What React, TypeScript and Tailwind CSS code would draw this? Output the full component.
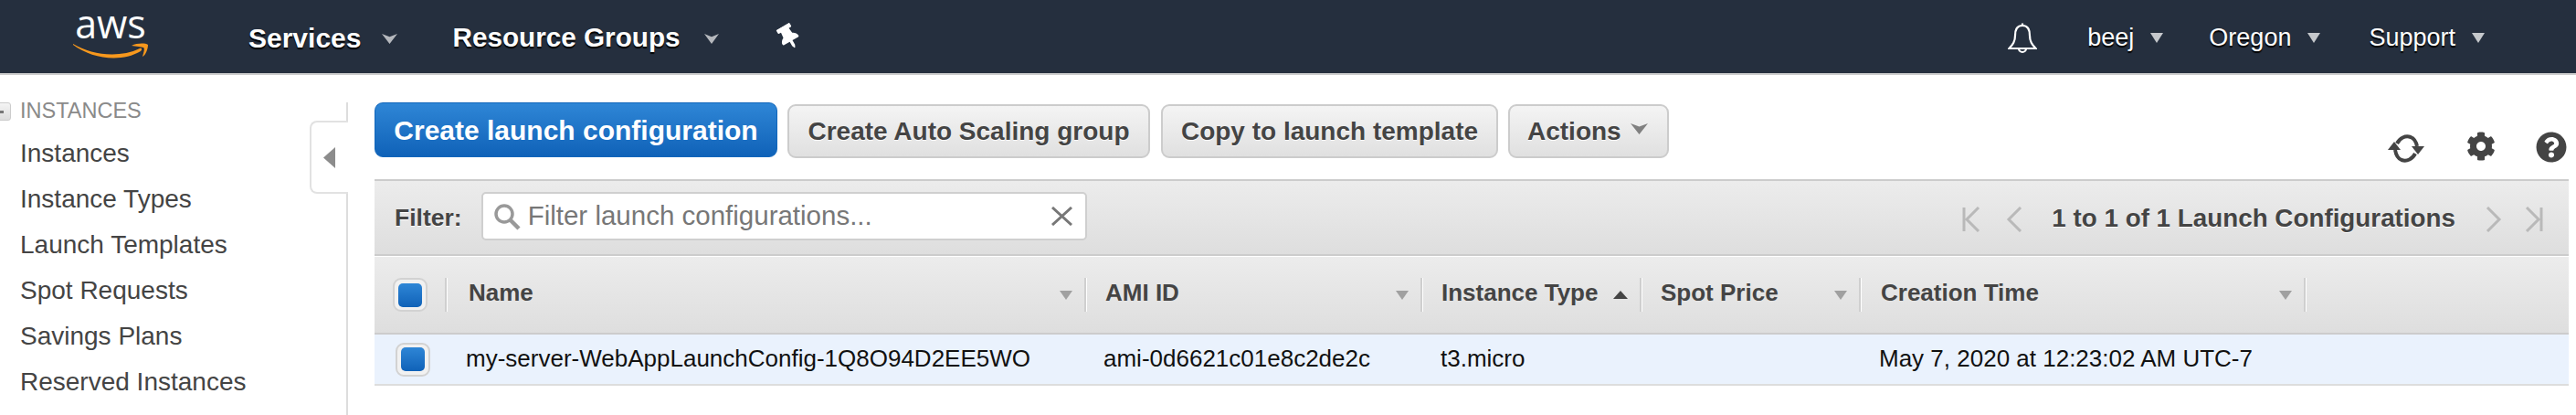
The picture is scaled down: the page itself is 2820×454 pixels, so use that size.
import React from "react";
import { FaCog, FaQuestionCircle, FaThumbtack } from "react-icons/fa";

const Caret = ({ w, h, color, up, notch }: { w: number; h: number; color: string; up?: boolean; notch?: boolean }) => (
  <svg width={w} height={h} viewBox="0 0 10 10" preserveAspectRatio="none" className="shrink-0">
    <path d={up ? "M5 0L10 10H0Z" : notch ? "M0 0L5 3L10 0L5 10Z" : "M0 0H10L5 10Z"} fill={color} />
  </svg>
);

const Pager = ({ d }: { d: string }) => (
  <svg width="20" height="28" viewBox="0 0 20 28" fill="none" stroke="#b9b9b9" strokeWidth="3" className="shrink-0">
    <path d={d} />
  </svg>
);

const Checkbox = () => (
  <div className="flex h-[37px] w-[38px] items-center justify-center rounded-[9px] border-2 border-[#d2d2d2] bg-[#f1f1f1]">
    <div className="h-[26px] w-[26px] rounded-[5px] bg-gradient-to-b from-[#2e86d6] to-[#0f62b8]" />
  </div>
);

const HeadCell = ({ label, sort, pad }: { label?: string; sort?: "down" | "up"; pad?: string }) => (
  <div className={`flex items-center ${pad ?? "pl-[23px]"}`}>
    <span className="flex-1 pb-[4px] text-[26px] font-bold text-[#444]">{label}</span>
    {sort === "down" && <Caret w={14} h={10} color="#a0a0a0" />}
    {sort === "up" && <Caret w={16} h={9} color="#444" up />}
    <div className="ml-[13px] h-[37px] w-[3px] border-l-2 border-[#cfcfcf] bg-white" />
  </div>
);

const sideItems = ["Instances", "Instance Types", "Launch Templates", "Spot Requests", "Savings Plans", "Reserved Instances"];

export default function App() {
  return (
    <div className="flex h-[454px] w-[2820px] flex-col overflow-hidden bg-white font-['Liberation_Sans',sans-serif]">
      {/* top nav */}
      <div className="flex h-[82px] shrink-0 items-center border-b-2 border-[#cccccc] bg-[#252f3e] text-white">
        <div className="ml-[80px] flex w-[82px] flex-col items-center">
          <span className="-mt-[4px] mb-[6px] font-['Open_Sans',sans-serif] text-[43px] leading-[30px]">aws</span>
          <svg width="82" height="18" viewBox="0 0 82 18" fill="#f7981d">
            <path d="M0 1C20 13 50 17 73 6C75 5 76 7 74 9C52 22 20 17 0 2Z" />
            <path d="M64 3C70 0 79 0 82 2C82 7 79 14 76 15C77 11 79 6 77 5C75 4 69 4 64 3Z" />
          </svg>
        </div>
        <span className="ml-[110px] pt-[2px] text-[30px] font-bold [text-shadow:0_2px_1px_#000]">Services</span>
        <span className="ml-[23px] pt-[4px]"><Caret w={17} h={11} color="#b5b8bd" notch /></span>
        <span className="ml-[60px] pt-[2px] text-[29.700px] font-bold [text-shadow:0_2px_1px_#000]">Resource Groups</span>
        <span className="ml-[26px] pt-[4px]"><Caret w={16} h={11} color="#b5b8bd" notch /></span>
        <FaThumbtack className="ml-[63px] h-[27px] w-[27px] -rotate-[30deg] text-white" />

        <div className="ml-auto flex items-center pr-[100px] pt-[3px] text-[27px]">
          <svg width="32" height="34" viewBox="0 0 32 34" fill="none" stroke="#fff" strokeWidth="2.2">
            <path d="M16 3C9 3 8 9 8 14C8 21 5 24 1.5 28H30.5C27 24 24 21 24 14C24 9 23 3 16 3Z" />
            <path d="M12 28a4 4 0 0 0 8 0" />
            <path d="M16 0.5V3" />
          </svg>
          <span className="ml-[55px] [text-shadow:0_2px_1px_#000]">beej</span>
          <span className="ml-[18px]"><Caret w={14} h={11} color="#c5c8cc" /></span>
          <span className="ml-[50px] [text-shadow:0_2px_1px_#000]">Oregon</span>
          <span className="ml-[18px]"><Caret w={14} h={11} color="#c5c8cc" /></span>
          <span className="ml-[53px] [text-shadow:0_2px_1px_#000]">Support</span>
          <span className="ml-[18px]"><Caret w={14} h={11} color="#c5c8cc" /></span>
        </div>
      </div>

      <div className="flex min-h-0 flex-1">
        {/* sidebar */}
        <div className="relative mt-[30px] w-[381px] shrink-0 border-r-2 border-[#dddddd]">
          <div className="flex h-[20px] items-center">
            <div className="-ml-[14px] flex h-[20px] w-[26px] items-center justify-center rounded-[3px] border border-[#cccccc] bg-gradient-to-b from-[#f4f4f4] to-[#dddddd]">
              <div className="h-[3px] w-[10px] bg-[#777]" />
            </div>
            <span className="ml-[10px] text-[23.500px] text-[#8a8a8a]">INSTANCES</span>
          </div>
          <div className="mt-[12px]">
            {sideItems.map((item) => (
              <div key={item} className="flex h-[50px] items-center pb-[2px] pl-[22px] text-[28px] text-[#444]">
                {item}
              </div>
            ))}
          </div>
          <div className="absolute left-[339px] top-[20px] flex h-[80px] w-[42px] items-center rounded-l-lg border-2 border-r-0 border-[#e2e2e2] bg-white pl-[13px]">
            <svg width="13" height="23" viewBox="0 0 13 23">
              <path d="M13 0V23L0 11.5Z" fill="#8c8c8c" />
            </svg>
          </div>
        </div>

        {/* main */}
        <div className="ml-[29px] flex w-[2402px] flex-col">
          <div className="flex h-[114px] shrink-0 items-start pt-[30px]">
            <button className="h-[60px] w-[441px] rounded-[9px] border border-[#1166bb] bg-gradient-to-b from-[#2e86d6] to-[#0f62b8] text-[30px] font-bold text-white">
              Create launch configuration
            </button>
            <button className="ml-[11px] mt-[2px] h-[59px] w-[397px] rounded-[9px] border-2 border-[#cccccc] bg-gradient-to-b from-[#f4f4f4] to-[#e0e0e0] text-[28px] font-bold text-[#444] [text-shadow:0_1px_0_#fff]">
              Create Auto Scaling group
            </button>
            <button className="ml-[12px] mt-[2px] h-[59px] w-[369px] rounded-[9px] border-2 border-[#cccccc] bg-gradient-to-b from-[#f4f4f4] to-[#e0e0e0] text-[28px] font-bold text-[#444] [text-shadow:0_1px_0_#fff]">
              Copy to launch template
            </button>
            <button className="ml-[11px] mt-[2px] flex h-[59px] w-[176px] items-center rounded-[9px] border-2 border-[#cccccc] bg-gradient-to-b from-[#f4f4f4] to-[#e0e0e0] pl-[19px] text-[28px] font-bold text-[#444] [text-shadow:0_1px_0_#fff]">
              Actions
              <span className="ml-[10px] -mt-[6px]"><Caret w={19} h={12} color="#808080" notch /></span>
            </button>
            <div className="ml-auto mt-[32px] flex items-start pr-[2px] text-[#444]">
              <svg width="42" height="33" viewBox="0 0 42 33" fill="none" stroke="#444" strokeWidth="4" className="mt-[2px]">
                <path d="M11 11C14 5 20 2 26 4C30 5.500 32 9 33 14" />
                <path d="M31 22C28 28 22 31 16 29C12 27.500 10 24 9 18" />
                <path d="M27 14H41L34 23Z" fill="#444" stroke="none" />
                <path d="M1 18H15L8 9Z" fill="#444" stroke="none" />
              </svg>
              <FaCog className="ml-[45px] h-[32px] w-[32px]" />
              <FaQuestionCircle className="ml-[44px] h-[34px] w-[34px]" />
            </div>
          </div>

          {/* filter bar */}
          <div className="flex h-[84px] shrink-0 items-center border-y-2 border-[#cccccc] bg-gradient-to-b from-[#ececec] to-[#dedede] pt-[4px]">
            <span className="mb-[2px] ml-[22px] text-[26.500px] font-bold text-[#444] [text-shadow:0_1px_0_#fff]">Filter:</span>
            <div className="mb-[7px] ml-[21px] flex h-[53px] w-[663px] items-center rounded-[5px] border-2 border-[#cfcfcf] bg-white pl-[11px]">
              <svg width="30" height="30" viewBox="0 0 30 30" fill="none" stroke="#999" strokeWidth="3.500" className="shrink-0">
                <circle cx="12" cy="12" r="9" />
                <path d="M19 19L28 28" strokeWidth="4.500" />
              </svg>
              <span className="ml-[8px] flex-1 text-[29.500px] text-[#777]">Filter launch configurations...</span>
              <svg width="23" height="21" viewBox="0 0 23 21" stroke="#777" strokeWidth="3" className="mr-[14px] shrink-0">
                <path d="M1 1L22 20M22 1L1 20" />
              </svg>
            </div>
            <div className="ml-auto flex items-center pr-[28px]">
              <Pager d="M2 1V27M18 1L5 14L18 27" />
              <span className="ml-[28px]"><Pager d="M16 1L3 14L16 27" /></span>
              <span className="mb-[2px] ml-[30px] text-[27.800px] font-bold text-[#444] [text-shadow:0_1px_0_#fff]">1 to 1 of 1 Launch Configurations</span>
              <span className="ml-[31px]"><Pager d="M4 1L17 14L4 27" /></span>
              <span className="ml-[25px]"><Pager d="M18 1V27M2 1L15 14L2 27" /></span>
            </div>
          </div>

          {/* table head */}
          <div className="mt-[1px] grid h-[85px] shrink-0 grid-cols-[80px_700px_368px_240px_240px_487px_1fr] border-b-2 border-[#cccccc] bg-gradient-to-b from-[#ececec] to-[#dedede]">
            <div className="flex items-center justify-between pl-[20px]">
              <Checkbox />
              <div className="h-[37px] w-[3px] border-l-2 border-[#cfcfcf] bg-white" />
            </div>
            <HeadCell label="Name" sort="down" />
            <HeadCell label="AMI ID" sort="down" pad="pl-[20px]" />
            <HeadCell label="Instance Type" sort="up" pad="pl-[20px]" />
            <HeadCell label="Spot Price" sort="down" pad="pl-[20px]" />
            <HeadCell label="Creation Time" sort="down" pad="pl-[21px]" />
            <div />
          </div>

          {/* row */}
          <div className="grid h-[56px] shrink-0 grid-cols-[80px_700px_368px_240px_240px_487px_1fr] items-center border-b-2 border-[#dddddd] bg-[#eaf2fd] text-[26px] text-[#111]">
            <div className="pl-[23px]"><Checkbox /></div>
            <div className="pb-[2px] pl-[20px]">my-server-WebAppLaunchConfig-1Q8O94D2EE5WO</div>
            <div className="pb-[2px] pl-[18px]">ami-0d6621c01e8c2de2c</div>
            <div className="pb-[2px] pl-[19px]">t3.micro</div>
            <div />
            <div className="pb-[2px] pl-[19px]">May 7, 2020 at 12:23:02 AM UTC-7</div>
            <div />
          </div>
        </div>
      </div>
    </div>
  );
}
